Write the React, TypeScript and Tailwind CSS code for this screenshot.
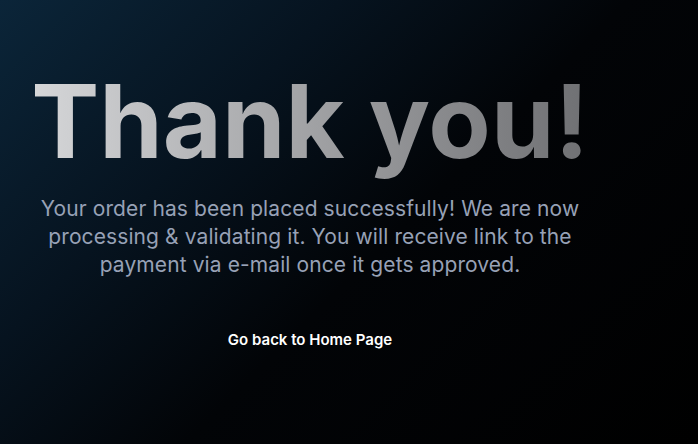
export default function App() {
  return (
    <div className="min-h-screen w-full bg-[linear-gradient(135deg,#0b2539_0%,#06131f_30%,#020407_55%,#000000_100%)] font-['Inter',sans-serif]">
      <div className="flex w-[620px] flex-col items-center pt-[61px]">
        <h1 className="bg-gradient-to-r from-[#d6d7d9] to-[#6f7073] bg-clip-text text-[102px] leading-[120px] font-bold tracking-[0px] text-transparent">
          Thank you!
        </h1>
        <p className="mt-[14px] w-[590px] text-center text-[21px] leading-[28px] tracking-[0.1px] text-[#97a1b6]">
          Your order has been placed successfully! We are now processing &amp; validating it. You will receive link to the payment via e-mail once it gets approved.
        </p>
        <a href="#" className="mt-[50px] text-[15px] font-semibold text-white">
          Go back to Home Page
        </a>
      </div>
    </div>
  );
}
